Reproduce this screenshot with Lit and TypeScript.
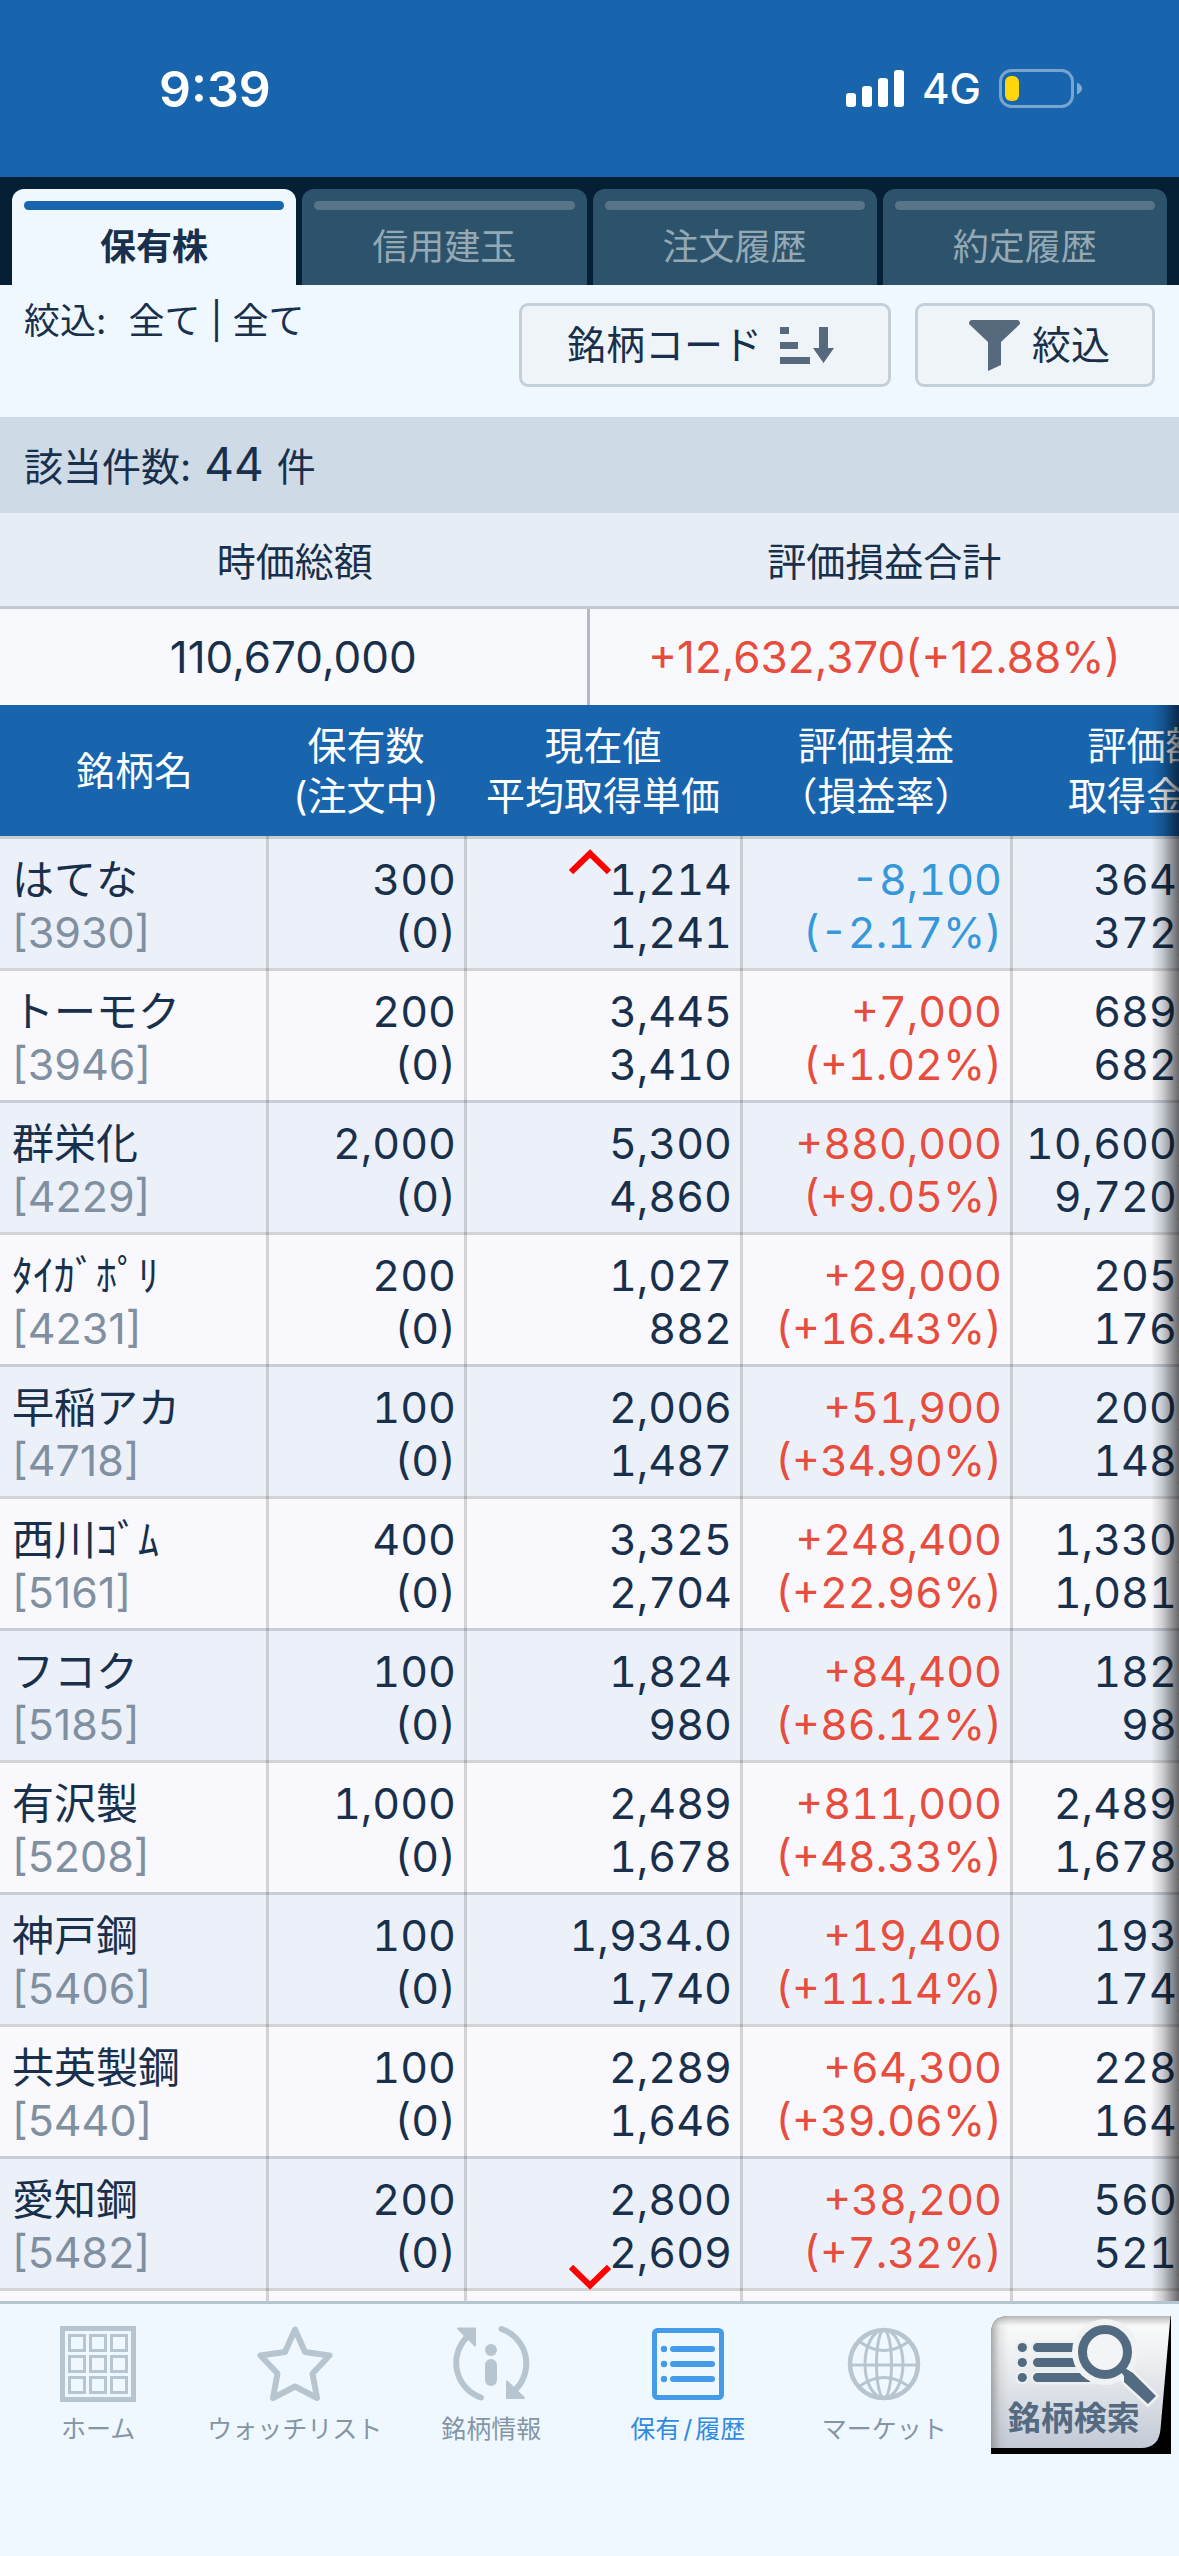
import { LitElement, html, css, svg } from "lit";
import { customElement, state } from "lit/decorators.js";
import { classMap } from "lit/directives/class-map.js";

interface Holding {
  name: string;
  code: string;
  qty: string;
  price: string;
  cost: string;
  gain: string;
  rate: string;
  value: string;
  paid: string;
}

const row = (
  name: string, code: string, qty: string, price: string, cost: string,
  gain: string, rate: string, value: string, paid: string,
): Holding => ({ name, code, qty, price, cost, gain, rate, value, paid });

const HOLDINGS: Holding[] = [
  row("はてな", "3930", "300", "1,214", "1,241", "-8,100", "-2.17%", "364,200", "372,300"),
  row("トーモク", "3946", "200", "3,445", "3,410", "+7,000", "+1.02%", "689,000", "682,000"),
  row("群栄化", "4229", "2,000", "5,300", "4,860", "+880,000", "+9.05%", "10,600,000", "9,720,000"),
  row("ﾀｲｶﾞﾎﾟﾘ", "4231", "200", "1,027", "882", "+29,000", "+16.43%", "205,400", "176,400"),
  row("早稲アカ", "4718", "100", "2,006", "1,487", "+51,900", "+34.90%", "200,600", "148,700"),
  row("西川ｺﾞﾑ", "5161", "400", "3,325", "2,704", "+248,400", "+22.96%", "1,330,000", "1,081,600"),
  row("フコク", "5185", "100", "1,824", "980", "+84,400", "+86.12%", "182,400", "98,000"),
  row("有沢製", "5208", "1,000", "2,489", "1,678", "+811,000", "+48.33%", "2,489,000", "1,678,000"),
  row("神戸鋼", "5406", "100", "1,934.0", "1,740", "+19,400", "+11.14%", "193,400", "174,000"),
  row("共英製鋼", "5440", "100", "2,289", "1,646", "+64,300", "+39.06%", "228,900", "164,600"),
  row("愛知鋼", "5482", "200", "2,800", "2,609", "+38,200", "+7.32%", "560,000", "521,800"),
];

const TABS = ["保有株", "信用建玉", "注文履歴", "約定履歴"];

const cells = [8, 29, 50];

const homeIcon = svg`
  <rect x="2.5" y="2.5" width="71" height="71" stroke-width="5"/>
  ${cells.flatMap((y) => cells.map((x) => svg`
    <rect x=${x + 1.5} y=${y + 1.5} width="15" height="15" stroke-width="3"/>`))}`;

const starIcon = svg`
  <path stroke-width="6" stroke-linejoin="round"
    d="M38 3.5 48 26 72.500 29.500 55.500 47.500 60 72 38 60.500 16 72 20.500 47.500 3.500 29.500 28 26Z"/>`;

const infoIcon = svg`
  <path stroke-width="6" stroke-linecap="round" d="M28 71.500A36.500 36.500 0 0 1 14 11M48.500 3A36.500 36.500 0 0 1 62 64"/>
  <path class="solid" stroke-width="2" stroke-linejoin="round"
    d="M5 2.500H22V19.500ZM54 55.500V72H71Z"/>
  <circle class="solid bare" cx="38" cy="24" r="6"/>
  <rect class="solid bare" x="32" y="33" width="12" height="27" rx="6"/>`;

const listIcon = svg`
  <rect x="4.500" y="4.500" width="67" height="67" rx="3" stroke-width="5"/>
  ${[23, 38, 53].map((y) => svg`
    <circle class="solid bare" cx="14" cy=${y} r="3.200"/>
    <rect class="solid bare" x="20" y=${y - 3} width="45" height="6" rx="3"/>`)}`;

const globeIcon = svg`
  <circle cx="38" cy="38" r="34" stroke-width="4.500"/>
  <g stroke-width="3">
    <ellipse cx="38" cy="38" rx="19" ry="34"/>
    <ellipse cx="38" cy="38" rx="7.500" ry="34"/>
    <path d="M4 39H72M14 16Q38 33 62 16M14 60Q38 43 62 60"/>
  </g>`;

const NAV = [
  { label: "ホーム", icon: homeIcon, href: "#home" },
  { label: "ウォッチリスト", icon: starIcon, href: "#watch" },
  { label: "銘柄情報", icon: infoIcon, href: "#info" },
  { label: html`保有<span class="slash">/</span>履歴`, icon: listIcon, href: "#holdings", active: true },
  { label: "マーケット", icon: globeIcon, href: "#market" },
];

@customElement("status-bar")
class StatusBar extends LitElement {
  static styles = css`
    :host {
      display: flex;
      align-items: center;
      justify-content: space-between;
      height: 177px;
      padding: 0 96px 0 159px;
      box-sizing: border-box;
      background: #1865ae;
      color: #fff;
      font-family: Inter, "Noto Sans CJK JP", sans-serif;
    }
    .time { font-size: 50px; font-weight: 600; }
    .right { display: flex; align-items: center; gap: 18px; }
    .net { font-size: 42px; font-weight: 500; }
    svg { display: block; }
  `;

  render() {
    return html`
      <span class="time">9:39</span>
      <span class="right">
        <svg width="58" height="38" viewBox="0 0 58 38" fill="#fff" aria-hidden="true">
          <rect x="0" y="23" width="10" height="14" rx="3"/>
          <rect x="16" y="16" width="10" height="21" rx="3"/>
          <rect x="32" y="8" width="10" height="29" rx="3"/>
          <rect x="48" y="0" width="10" height="37" rx="3"/>
        </svg>
        <span class="net">4G</span>
        <svg width="84" height="40" viewBox="0 0 84 40" aria-hidden="true">
          <rect x="1.5" y="1.5" width="72" height="36" rx="11" fill="none" stroke="#fff" stroke-opacity=".42" stroke-width="3"/>
          <rect x="6" y="7" width="14" height="25" rx="6" fill="#ffd60a"/>
          <path d="M78 13.500Q83 16 83 19.500T78 25.500Z" fill="#fff" fill-opacity=".45"/>
        </svg>
      </span>`;
  }
}

@customElement("tab-strip")
class TabStrip extends LitElement {
  @state() private selected = 0;

  static styles = css`
    :host {
      display: grid;
      grid-template-columns: repeat(4, 1fr);
      gap: 6px;
      padding: 12px 12px 0;
      background: #052034;
    }
    .tab {
      display: flex;
      flex-direction: column;
      height: 96px;
      padding: 12px 12px 0;
      border: 0;
      border-radius: 12px 12px 0 0;
      background: #2c536b;
      color: #95a9b5;
      font: 36px/75px Inter, "Noto Sans CJK JP", sans-serif;
      text-align: center;
    }
    .tab::before {
      content: "";
      flex: none;
      align-self: stretch;
      height: 9px;
      border-radius: 5px;
      background: #587489;
    }
    .label { align-self: center; }
    .on { background: #f0f8ff; color: #18304b; font-weight: 700; }
    .on::before { background: #1865ae; }
  `;

  render() {
    return TABS.map((label, i) => html`
      <button class=${classMap({ tab: true, on: i === this.selected })}
        @click=${() => (this.selected = i)}><span class="label">${label}</span></button>`);
  }
}

@customElement("holdings-table")
class HoldingsTable extends LitElement {
  static styles = css`
    :host {
      display: block;
      position: relative;
      overflow: hidden;
      color: #18304b;
      font-family: Inter, "Noto Sans CJK JP", sans-serif;
    }
    :host::after {
      content: "";
      position: absolute;
      inset: 0 0 0 auto;
      width: 28px;
      background: linear-gradient(to right, transparent, rgba(0, 0, 0, 0.16) 40%, rgba(0, 0, 0, 0.58));
    }
    .grid { width: 1283px; table-layout: fixed; border-collapse: separate; border-spacing: 0; }
    .c-name { width: 269px; }
    .c-qty { width: 198px; }
    .c-price { width: 276px; }
    .c-gain { width: 270px; }
    .c-value { width: 270px; }
    th {
      height: 131px;
      padding: 0;
      background: #1865ae;
      color: #fff;
      font-size: 39px;
      font-weight: 400;
      line-height: 50px;
      white-space: nowrap;
    }
    th + th { padding-right: 4px; }
    .line { display: block; }
    .row {
      height: 132px;
      background: linear-gradient(rgba(0, 0, 0, 0.15) 3px, transparent 3px) #f8f8fd;
    }
    .row:nth-child(odd) { background-color: #ecf1f9; }
    td {
      padding: 17px 8px 9px 12px;
      border-right: 3px solid rgba(0, 0, 0, 0.15);
      font-size: 43px;
      line-height: 53px;
      text-align: right;
      vertical-align: top;
      white-space: nowrap;
      font-variant-numeric: tabular-nums;
    }
    .name { text-align: left; font-variant-numeric: normal; }
    .title { font-size: 42px; }
    .code { color: #8090a1; }
    .up { color: #e74c3c; }
    .down { color: #3498db; }
    .hint { position: absolute; left: 50%; margin-left: -21px; }
    .top { top: 144px; }
    .bottom { bottom: 11px; }
  `;

  render() {
    return html`
      <table class="grid">
        <colgroup>
          <col class="c-name"><col class="c-qty"><col class="c-price"><col class="c-gain"><col class="c-value">
        </colgroup>
        <thead>
          <tr>
            <th>銘柄名</th>
            <th><span class="line">保有数</span><span class="line">(注文中)</span></th>
            <th><span class="line">現在値</span><span class="line">平均取得単価</span></th>
            <th><span class="line">評価損益</span><span class="line">（損益率）</span></th>
            <th><span class="line">評価額</span><span class="line">取得金額</span></th>
          </tr>
        </thead>
        <tbody>
          ${HOLDINGS.map((h) => {
            const tone = h.gain.startsWith("-") ? "down" : "up";
            return html`
              <tr class="row">
                <td class="name"><span class="line title">${h.name}</span><span class="line code">[${h.code}]</span></td>
                <td><span class="line">${h.qty}</span><span class="line">(0)</span></td>
                <td><span class="line">${h.price}</span><span class="line">${h.cost}</span></td>
                <td class=${tone}><span class="line">${h.gain}</span><span class="line">(${h.rate})</span></td>
                <td><span class="line">${h.value}</span><span class="line">${h.paid}</span></td>
              </tr>`;
          })}
          <tr class="row"><td></td><td></td><td></td><td></td><td></td></tr>
        </tbody>
      </table>
      <svg class="hint top" width="42" height="26" viewBox="0 0 42 26" aria-hidden="true">
        <path d="M2 23 21 4.500 40 23" fill="none" stroke="red" stroke-width="6"/>
      </svg>
      <svg class="hint bottom" width="42" height="26" viewBox="0 0 42 26" aria-hidden="true">
        <path d="M2 3 21 21.500 40 3" fill="none" stroke="red" stroke-width="6"/>
      </svg>`;
  }
}

@customElement("bottom-nav")
class BottomNav extends LitElement {
  static styles = css`
    :host {
      display: grid;
      grid-template-columns: repeat(6, 1fr);
      height: 255px;
      box-sizing: border-box;
      border-top: 3px solid #b4c5d0;
      background: #f0f8ff;
      font-family: Inter, "Noto Sans CJK JP", sans-serif;
    }
    .item {
      display: flex;
      flex-direction: column;
      align-items: center;
      gap: 12px;
      padding-top: 22px;
      color: #8496a6;
      font-size: 25px;
      line-height: 30px;
      text-decoration: none;
      white-space: nowrap;
    }
    .icon { display: block; overflow: visible; fill: none; stroke: #b7c5d0; }
    .solid { fill: #b7c5d0; }
    .bare { stroke: none; }
    .slash { padding: 0 3px; }
    .active { color: #2f8ae0; }
    .active .icon { stroke: #469be8; }
    .active .solid { fill: #469be8; }
    .search {
      position: relative;
      justify-self: center;
      align-self: start;
      width: 180px;
      height: 138px;
      margin-top: 12px;
      box-sizing: border-box;
      padding: 84px 14px 0 0;
      color: #536a80;
      font-size: 33px;
      font-weight: 700;
      line-height: 36px;
      text-align: center;
      text-decoration: none;
      white-space: nowrap;
    }
    .art { position: absolute; inset: 0; }
    .caption { position: relative; }
  `;

  render() {
    return html`
      ${NAV.map((n) => html`
        <a class=${classMap({ item: true, active: !!n.active })} href=${n.href}>
          <svg class="icon" width="76" height="76" viewBox="0 0 76 76" aria-hidden="true">${n.icon}</svg>
          <span>${n.label}</span>
        </a>`)}
      <a class="search" href="#search">
        <svg class="art" width="180" height="138" viewBox="0 0 180 138" aria-hidden="true">
          <defs>
            <linearGradient id="face" x1="0" y1="0" x2="0" y2="1">
              <stop offset="0" stop-color="#fcfcfc"/><stop offset=".35" stop-color="#eceef0"/><stop offset="1" stop-color="#c3cad6"/>
            </linearGradient>
            <linearGradient id="side" x1="0" y1="0" x2="1" y2="0">
              <stop offset="0" stop-color="#777" stop-opacity=".6"/><stop offset=".5" stop-color="#888" stop-opacity=".15"/><stop offset="1" stop-color="#999" stop-opacity="0"/>
            </linearGradient>
            <linearGradient id="lid" x1="0" y1="0" x2="0" y2="1">
              <stop offset="0" stop-color="#777" stop-opacity=".55"/><stop offset="1" stop-color="#999" stop-opacity="0"/>
            </linearGradient>
            <clipPath id="plate">
              <path d="M0 132V18Q0 0 18 0H179.500L169.500 113Q168 132 150 132Z"/>
            </clipPath>
          </defs>
          <path d="M0 138V18Q0 0 18 0H180V138Z" fill="#000"/>
          <g clip-path="url(#plate)">
            <rect width="180" height="132" fill="url(#face)"/>
            <rect width="18" height="132" fill="url(#side)"/>
            <rect width="180" height="10" fill="url(#lid)"/>
          </g>
          <g stroke="#eceff2" stroke-width="5" fill="#eceff2" stroke-linejoin="round">
            <circle cx="31.300" cy="31.500" r="4.600"/><circle cx="31.300" cy="46.500" r="4.600"/><circle cx="31.300" cy="61.500" r="4.600"/>
            <rect x="42" y="27" width="60" height="9" rx="4.500"/><rect x="42" y="42" width="60" height="9" rx="4.500"/><rect x="42" y="57" width="62" height="9" rx="4.500"/>
          </g>
          <g fill="#536b80">
            <circle cx="31.300" cy="31.500" r="4.600"/><circle cx="31.300" cy="46.500" r="4.600"/><circle cx="31.300" cy="61.500" r="4.600"/>
            <path d="M46.500 27H100V36H46.500A4.500 4.500 0 0 1 46.500 27ZM46.500 42H100V51H46.500A4.500 4.500 0 0 1 46.500 42ZM46.500 57H99V66H46.500A4.500 4.500 0 0 1 46.500 57Z"/>
          </g>
          <circle cx="114" cy="36" r="33" fill="#f0f2f4"/>
          <path d="M131 57 135 53 142 57 165 80 157 88 133 66V60Z" fill="#536b80" stroke="#f0f2f4" stroke-width="5"/>
          <path d="M130 56 134 52 142 57 165 80 157 88 133 66V60Z" fill="#536b80"/>
          <circle cx="114" cy="36" r="22.500" fill="#f3f4f5" stroke="#536b80" stroke-width="9"/>
        </svg>
        <span class="caption">銘柄検索</span>
      </a>`;
  }
}

@customElement("app-root")
class AppRoot extends LitElement {
  static styles = css`
    :host {
      display: flex;
      flex-direction: column;
      height: 100vh;
      overflow: hidden;
      background: #f0f8ff;
      color: #18304b;
      font-family: Inter, "Noto Sans CJK JP", sans-serif;
    }
    status-bar, tab-strip, .filter, .count, .summary, bottom-nav { flex: none; }
    holdings-table { flex: 1; min-height: 0; }
    .filter {
      display: flex;
      align-items: flex-start;
      gap: 24px;
      height: 132px;
      box-sizing: border-box;
      padding: 18px 24px 0;
    }
    .state { display: flex; gap: 22px; margin-right: auto; font-size: 36px; line-height: 36px; }
    .btn {
      display: flex;
      align-items: center;
      height: 84px;
      border: 3px solid #c3d0dc;
      border-radius: 9px;
      background: #eff4f8;
      color: inherit;
      font: 39px/48px Inter, "Noto Sans CJK JP", sans-serif;
      white-space: nowrap;
    }
    .sort { gap: 18px; padding: 0 54px 0 45px; }
    .narrow { gap: 12px; padding: 0 42px 0 51px; }
    .btn svg { fill: #57697c; }
    .count {
      display: flex;
      align-items: baseline;
      gap: 13px;
      height: 96px;
      padding: 0 24px;
      background: #cedae6;
      font-size: 39px;
      line-height: 94px;
    }
    .num { font-size: 46px; }
    .summary { width: 100%; table-layout: fixed; border-collapse: separate; border-spacing: 0; text-align: center; }
    .summary th {
      height: 91px;
      padding: 0 0 2px;
      border-bottom: 3px solid #c2c9d1;
      background: #e6edf5;
      font-size: 39px;
      font-weight: 400;
    }
    .summary td { height: 96px; padding: 0; background: #f8f9fd; font-size: 44px; }
    .summary .total { border-right: 3px solid #b2bac6; }
    .summary .gain { color: #e74c3c; }
  `;

  render() {
    return html`
      <status-bar></status-bar>
      <tab-strip></tab-strip>
      <div class="filter">
        <div class="state"><span>絞込:</span><span>全て | 全て</span></div>
        <button class="btn sort">銘柄コード
          <svg width="54" height="37" viewBox="0 0 54 37" aria-hidden="true">
            <path d="M0 0H9V7H0ZM0 15H18V22H0ZM0 30H30V37H0ZM39 0H48V21H54L43.500 36 33 21H39Z"/>
          </svg>
        </button>
        <button class="btn narrow">
          <svg width="51" height="51" viewBox="0 0 51 51" aria-hidden="true">
            <path d="M3 0H48Q51 0 51 4L32 22V45L19 51V22L0 4Q0 0 3 0Z"/>
          </svg>絞込
        </button>
      </div>
      <div class="count"><span>該当件数:</span><span class="num">44</span><span>件</span></div>
      <table class="summary">
        <thead><tr><th>時価総額</th><th>評価損益合計</th></tr></thead>
        <tbody><tr><td class="total">110,670,000</td><td class="gain">+12,632,370(+12.88%)</td></tr></tbody>
      </table>
      <holdings-table></holdings-table>
      <bottom-nav></bottom-nav>`;
  }
}
